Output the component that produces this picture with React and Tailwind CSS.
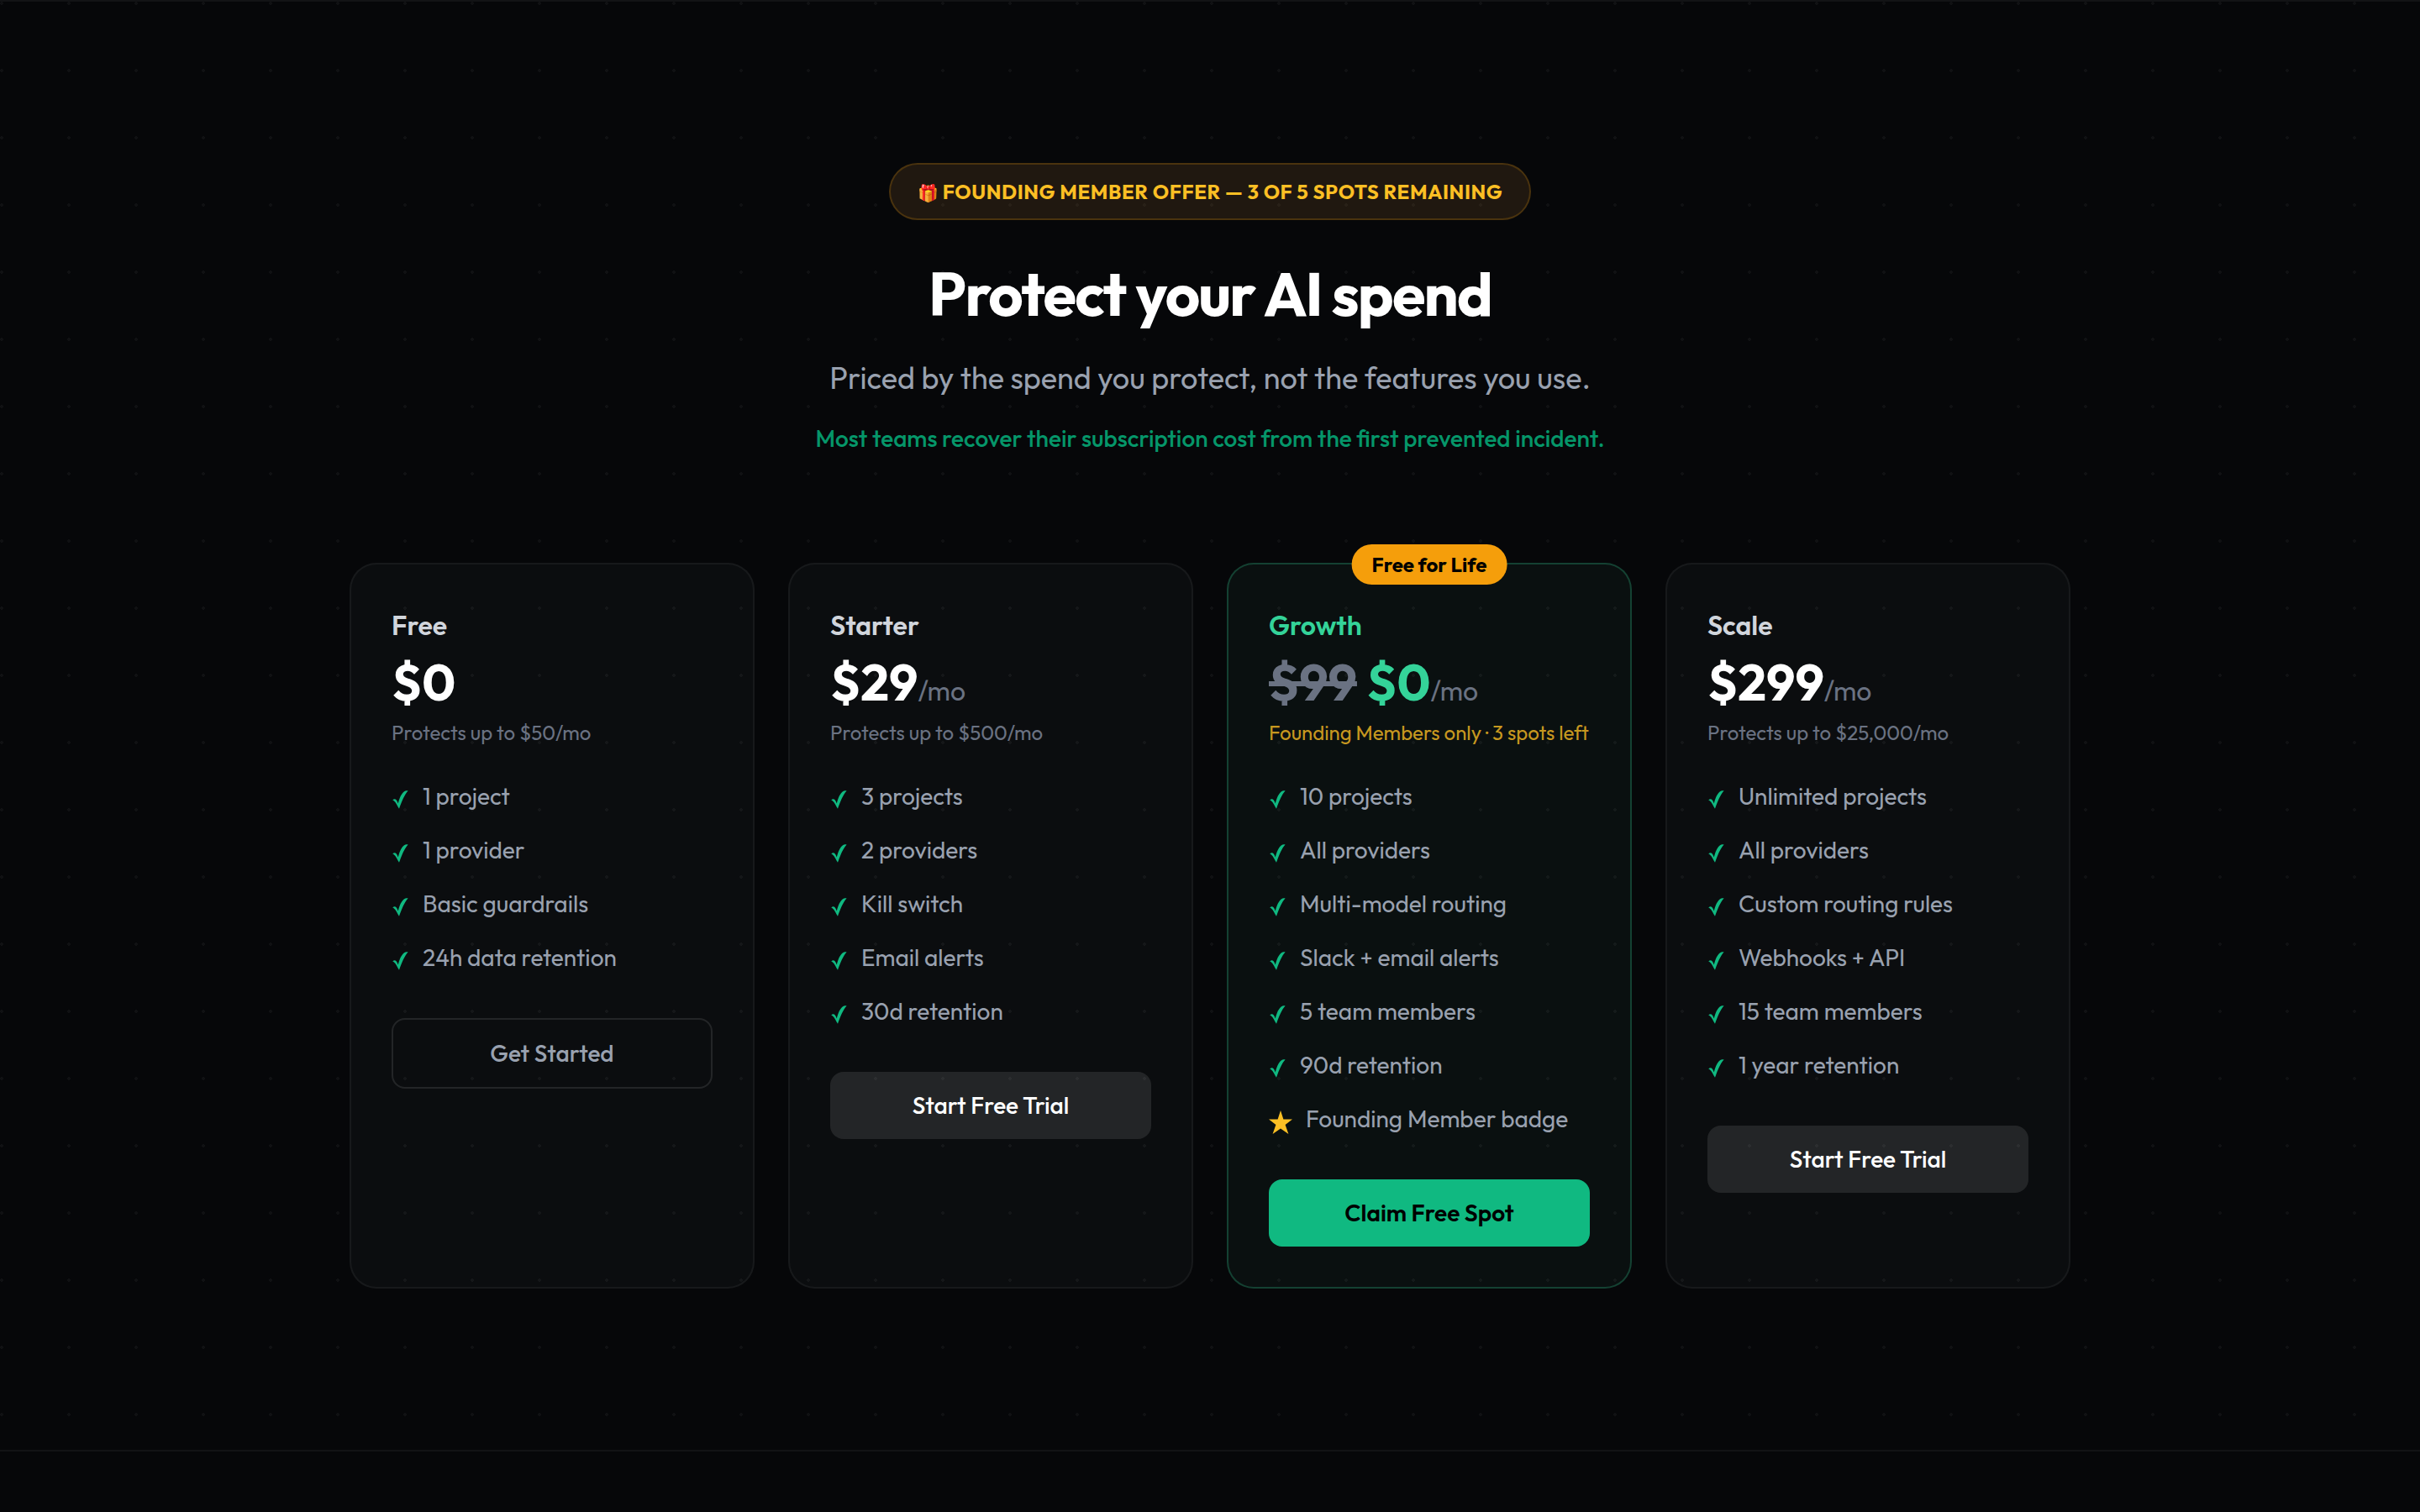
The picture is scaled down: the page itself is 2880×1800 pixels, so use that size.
import { clsx } from 'clsx';

const plans = [
  {
    name: 'Free',
    price: '$0',
    note: 'Protects up to $50/mo',
    features: ['1 project', '1 provider', 'Basic guardrails', '24h data retention'],
    cta: 'Get Started',
    variant: 'outline'
  },
  {
    name: 'Starter',
    price: '$29',
    monthly: true,
    note: 'Protects up to $500/mo',
    features: ['3 projects', '2 providers', 'Kill switch', 'Email alerts', '30d retention'],
    cta: 'Start Free Trial',
    variant: 'muted'
  },
  {
    name: 'Growth',
    price: '$0',
    oldPrice: '$99',
    monthly: true,
    note: 'Founding Members only · 3 spots left',
    features: [
      '10 projects',
      'All providers',
      'Multi-model routing',
      'Slack + email alerts',
      '5 team members',
      '90d retention'
    ],
    bonus: 'Founding Member badge',
    cta: 'Claim Free Spot',
    variant: 'primary',
    badge: 'Free for Life'
  },
  {
    name: 'Scale',
    price: '$299',
    monthly: true,
    note: 'Protects up to $25,000/mo',
    features: [
      'Unlimited projects',
      'All providers',
      'Custom routing rules',
      'Webhooks + API',
      '15 team members',
      '1 year retention'
    ],
    cta: 'Start Free Trial',
    variant: 'muted'
  }
];

const buttonStyles = {
  outline: 'border-2 border-white/10 text-gray-400 font-medium',
  muted: 'bg-white/10 text-white font-medium',
  primary: 'bg-[#10b981] text-black font-semibold'
};

function CheckIcon() {
  return (
    <svg viewBox="0 0 21 24" className="w-[21px] h-6 mt-2 shrink-0 text-[#10b981]" fill="currentColor" aria-hidden="true">
      <path d="M1.2 12.4C2.6 11.2 4.2 10.8 5.4 12C6.4 13 7.2 14.8 7.8 16.4C9.4 9.6 12 4.4 15 2.2C16.4 1.2 18 1.1 19.6 1.5C15.4 6 12 14 9 22.8C6.6 18.6 4.4 13.4 1.2 12.4Z" />
    </svg>
  );
}

function StarIcon() {
  return (
    <svg viewBox="0 0 28 28" className="w-7 h-7 mt-2 shrink-0 text-[#fbbf24]" fill="currentColor" aria-hidden="true">
      <path d="M14 0L17.4 10.4H28L19.6 17L23.4 28L14 21.6L4.6 28L8.4 17L0 10.4H10.6Z" />
    </svg>
  );
}

function PlanCard({ plan }) {
  const featured = plan.variant === 'primary';

  return (
    <article
      className={clsx(
        'relative rounded-4xl border-2 p-12',
        featured ? 'border-[#34d399]/25 bg-[#6ee7b7]/[0.045]' : 'border-white/5 bg-[#e0f4ff]/[0.026]'
      )}
    >
      {plan.badge && (
        <span className="absolute -top-6 left-1/2 -translate-x-1/2 whitespace-nowrap rounded-full bg-[#f59e0b] px-6 py-2 text-2xl/8 font-bold text-black">
          {plan.badge}
        </span>
      )}

      <h3 className={clsx('mb-2 text-[32px]/12 font-semibold', featured ? 'text-[#34d399]' : 'text-gray-300')}>
        {plan.name}
      </h3>
      <p className="text-6xl/[72px] font-bold text-white">
        {plan.oldPrice && <><s className="text-gray-500">{plan.oldPrice}</s>{' '}</>}
        <span className={featured ? 'text-[#34d399]' : 'text-white'}>{plan.price}</span>
        {plan.monthly && <span className="text-[32px]/8 font-normal text-gray-500">/mo</span>}
      </p>
      <p className={clsx('mt-2 text-2xl/8', featured ? 'text-[#fbbf24]/80' : 'text-gray-500')}>
        {plan.note}
      </p>

      <ul className="mt-10 space-y-6 text-[28px]/10 text-gray-400">
        {plan.features.map((feature) => (
          <li key={feature} className="flex items-center gap-4">
            <CheckIcon />
            {feature}
          </li>
        ))}
        {plan.bonus && (
          <li className="flex items-center gap-4">
            <StarIcon />
            {plan.bonus}
          </li>
        )}
      </ul>

      <button
        type="button"
        className={clsx('mt-13 w-full rounded-2xl py-5 text-[28px]/10', buttonStyles[plan.variant])}
      >
        {plan.cta}
      </button>
    </article>
  );
}

export default function App() {
  return (
    <main className="min-h-screen bg-[#060709] font-['Outfit','Lato',sans-serif] text-white">
      <section className="border-y-2 border-white/5 bg-[radial-gradient(circle_at_2px_2px,rgba(255,255,255,0.04)_2px,transparent_0)] bg-size-[80px_80px] px-12 py-48">
        <div className="mx-auto max-w-[2048px]">
          <header className="mb-32 text-center">
            <p className="mb-12 inline-block rounded-full border-2 border-[#f59e0b]/20 bg-[#f5a849]/[0.11] px-8 py-4 align-top text-2xl/8 font-bold tracking-wide text-[#fbbf24]">
              <span className="text-xl/5">🎁 </span>FOUNDING MEMBER OFFER — 3 OF 5 SPOTS REMAINING
            </p>
            <h2 className="mb-8 text-7xl/20 font-bold tracking-tight">Protect your AI spend</h2>
            <p className="mb-6 text-4xl/14 text-gray-400">
              Priced by the spend you protect, not the features you use.
            </p>
            <p className="text-[28px]/10 font-medium text-[#059669]">
              Most teams recover their subscription cost from the first prevented incident.
            </p>
          </header>

          <div className="grid grid-cols-4 gap-10">
            {plans.map((plan) => (
              <PlanCard key={plan.name} plan={plan} />
            ))}
          </div>
        </div>
      </section>
    </main>
  );
}
